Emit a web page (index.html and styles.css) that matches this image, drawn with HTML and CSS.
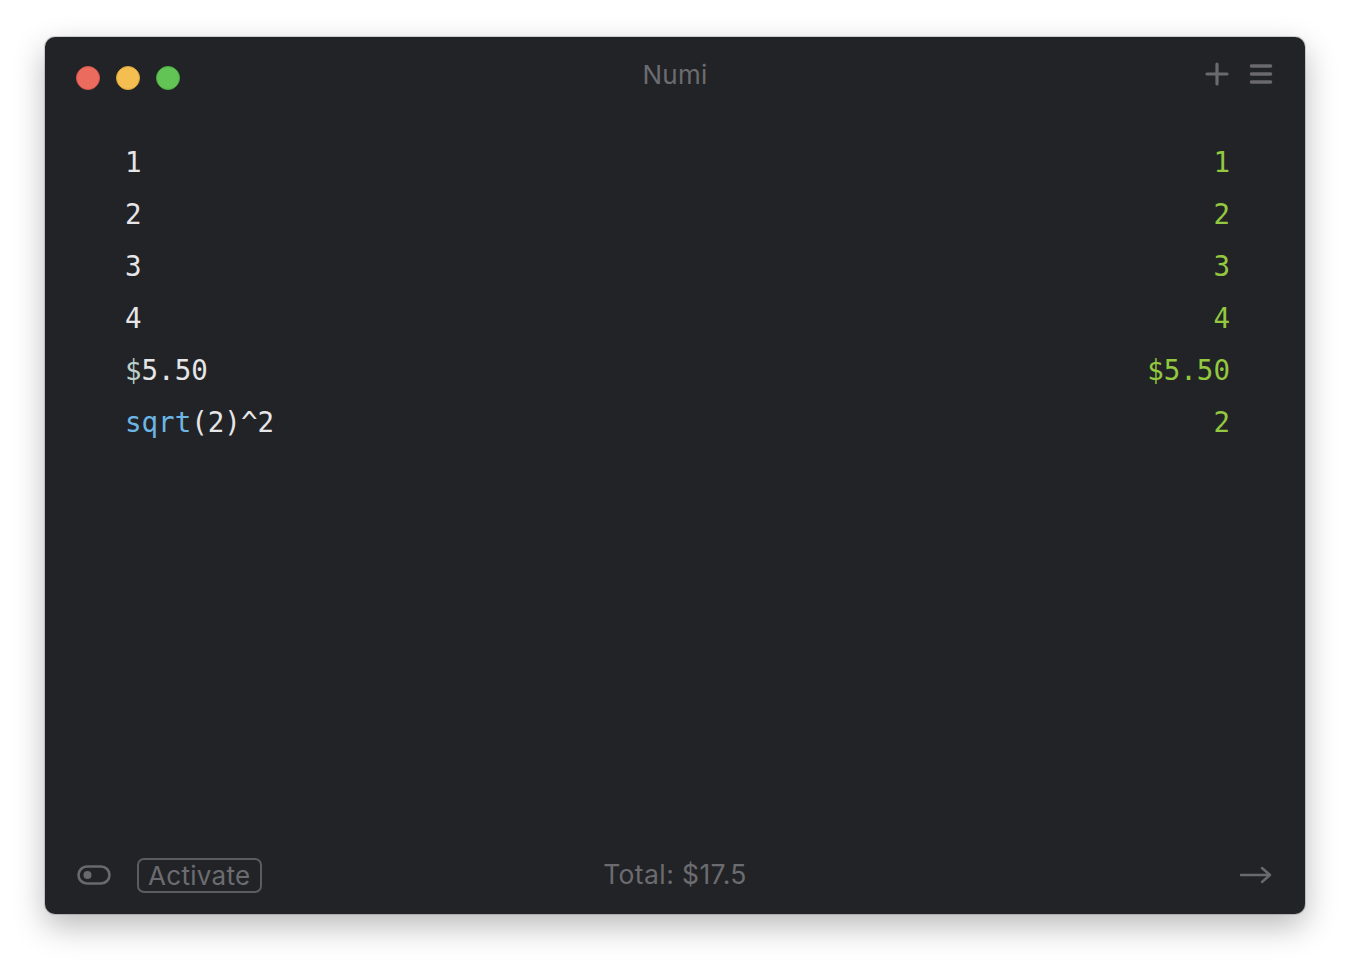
FILE: index.html
```html
<!DOCTYPE html>
<html>
<head>
<meta charset="utf-8">
<link rel="stylesheet" href="styles.css">
</head>
<body>
<div class="window">
  <div class="titlebar">
    <div class="lights">
      <span class="light red"></span>
      <span class="light yellow"></span>
      <span class="light green"></span>
    </div>
    <div class="title">Numi</div>
    <div class="tools">
      <svg class="icon" width="24" height="24" viewBox="0 0 24 24"><path d="M12 2v20M2 12h20" stroke="#6a6a6e" stroke-width="3.2" stroke-linecap="round" fill="none"/></svg>
      <svg class="icon" width="24" height="22" viewBox="0 0 24 22"><path d="M2.5 3h19M2.5 11h19M2.5 19h19" stroke="#6a6a6e" stroke-width="3.6" stroke-linecap="round" fill="none"/></svg>
    </div>
  </div>
  <div class="sheet">
    <div class="row"><span class="expr">1</span><span class="result">1</span></div>
    <div class="row"><span class="expr">2</span><span class="result">2</span></div>
    <div class="row"><span class="expr">3</span><span class="result">3</span></div>
    <div class="row"><span class="expr">4</span><span class="result">4</span></div>
    <div class="row"><span class="expr"><span class="cur">$</span>5.50</span><span class="result">$5.50</span></div>
    <div class="row"><span class="expr"><span class="fn">sqrt</span>(2)^2</span><span class="result">2</span></div>
  </div>
  <div class="footer">
    <div class="footer-left">
      <svg class="toggle" width="34" height="22" viewBox="0 0 34 22"><rect x="1.5" y="2.5" width="31" height="17" rx="8.5" stroke="#6a6a6e" stroke-width="2.6" fill="none"/><circle cx="10.5" cy="11" r="4" fill="#6a6a6e"/></svg>
      <div class="activate">Activate</div>
    </div>
    <div class="total">Total: $17.5</div>
    <div class="footer-right">
      <svg width="34" height="20" viewBox="0 0 34 20"><path d="M2 10h29M23 3l8 7-8 7" stroke="#6a6a6e" stroke-width="2.4" stroke-linecap="round" stroke-linejoin="round" fill="none"/></svg>
    </div>
  </div>
</div>
</body>
</html>
```
FILE: styles.css
```css
html, body {
  margin: 0;
  padding: 0;
  background: #ffffff;
}
body {
  padding: 37px 45px 0 45px;
  min-height: 968px;
  box-sizing: border-box;
  font-family: "Inter", "Liberation Sans", sans-serif;
}
.window {
  width: 1260px;
  height: 877px;
  background: #222327;
  border-radius: 10px;
  box-shadow: 0 12px 32px rgba(0, 0, 0, 0.28), 0 0 0 1px rgba(0, 0, 0, 0.15);
  display: flex;
  flex-direction: column;
  overflow: hidden;
}
.titlebar {
  height: 80px;
  display: flex;
  align-items: center;
  justify-content: space-between;
  padding: 0 31px;
  position: relative;
}
.lights {
  display: flex;
  gap: 16px;
  padding-top: 2px;
}
.light {
  width: 24px;
  height: 24px;
  border-radius: 50%;
  box-sizing: border-box;
}
.red { background: #ec6b5f; border: 1px solid #d3574c; }
.yellow { background: #f4bf50; border: 1px solid #d9a53c; }
.green { background: #61c454; border: 1px solid #4eaa42; }
.title {
  position: absolute;
  left: 0;
  right: 0;
  top: 22px;
  text-align: center;
  color: #6c6c70;
  font-size: 26px;
  letter-spacing: 0.2px;
  font-weight: 400;
  pointer-events: none;
}
.tools {
  display: flex;
  gap: 20px;
  align-items: center;
  margin-top: -6px;
  margin-right: 1px;
}
.sheet {
  flex: 1;
  padding: 19px 75px 0 80px;
  font-family: "DejaVu Sans Mono", "Liberation Mono", monospace;
  font-size: 27.5px;
}
.row {
  height: 52px;
  line-height: 52px;
  display: flex;
  justify-content: space-between;
}
.expr { color: #e6e6e8; }
.cur { color: #b9cfca; }
.fn { color: #6cb6e6; }
.result { color: #93c83f; }
.footer {
  height: 78px;
  display: flex;
  align-items: center;
  justify-content: space-between;
  padding: 0 32px 0 32px;
  position: relative;
}
.footer-left {
  display: flex;
  align-items: center;
  gap: 26px;
}
.activate {
  border: 2px solid #5c5c60;
  border-radius: 7px;
  color: #6c6c70;
  font-size: 26px;
  letter-spacing: 0.3px;
  line-height: 31px;
  padding: 0 9px;
}
.total {
  position: absolute;
  left: 0;
  right: 0;
  text-align: center;
  color: #6c6c70;
  font-size: 26.5px;
  letter-spacing: 0.4px;
  top: 22px;
  pointer-events: none;
}
.footer-right {
  display: flex;
  align-items: center;
}
```
